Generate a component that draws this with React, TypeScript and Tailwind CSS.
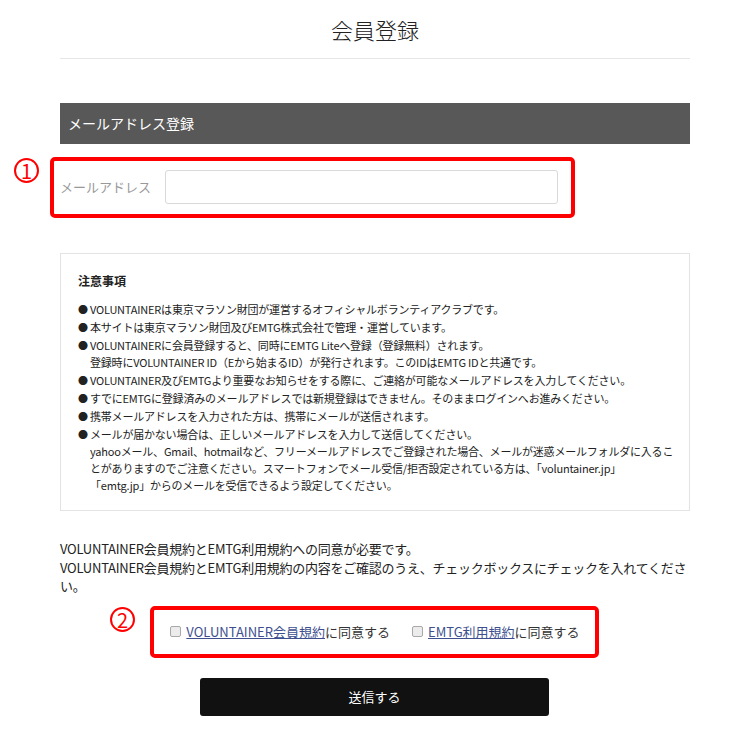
import React from "react";

const notes: string[][] = [
  ["VOLUNTAINERは東京マラソン財団が運営するオフィシャルボランティアクラブです。"],
  ["本サイトは東京マラソン財団及びEMTG株式会社で管理・運営しています。"],
  [
    "VOLUNTAINERに会員登録すると、同時にEMTG Liteへ登録（登録無料）されます。",
    "登録時にVOLUNTAINER ID（Eから始まるID）が発行されます。このIDはEMTG IDと共通です。",
  ],
  ["VOLUNTAINER及びEMTGより重要なお知らせをする際に、ご連絡が可能なメールアドレスを入力してください。"],
  ["すでにEMTGに登録済みのメールアドレスでは新規登録はできません。そのままログインへお進みください。"],
  ["携帯メールアドレスを入力された方は、携帯にメールが送信されます。"],
  [
    "メールが届かない場合は、正しいメールアドレスを入力して送信してください。",
    "yahooメール、Gmail、hotmailなど、フリーメールアドレスでご登録された場合、メールが迷惑メールフォルダに入るこ",
    "とがありますのでご注意ください。スマートフォンでメール受信/拒否設定されている方は、「voluntainer.jp」",
    "「emtg.jp」からのメールを受信できるよう設定してください。",
  ],
];

const Marker = ({ n }: { n: string }) => (
  <span className="absolute flex h-[25px] w-[25px] items-center justify-center rounded-full border-2 border-[#ff0000] text-[20px] leading-none text-[#ff0000]">
    {n}
  </span>
);

const Checkbox = () => (
  <span className="inline-block h-[11px] w-[11px] shrink-0 rounded-[2px] border border-[#a8a8a8] bg-[#ececec]" />
);

export default function App() {
  return (
    <div className="relative min-h-[738px] w-[750px] bg-white font-['Noto_Sans_CJK_JP','Noto_Sans',sans-serif] text-[#333]">
      <div className="mx-[60px] w-[630px]">
        {/* title */}
        <div className="border-b border-[#e6e6e6] pt-[15px] pb-[15px] text-center text-[22px] font-light leading-[28px] text-[#222]">
          会員登録
        </div>

        {/* email section */}
        <div className="mt-[44px] h-[41px] bg-[#585858] pl-[8px] text-[14px] leading-[41px] text-white">
          メールアドレス登録
        </div>
        <div className="mt-[26px] flex h-[34px] items-center">
          <span className="w-[105px] text-[13px] text-[#999]">メールアドレス</span>
          <input className="h-[34px] w-[393px] rounded-[3px] border border-[#d9d9d9] bg-white" />
        </div>

        {/* notes */}
        <div className="mt-[49px] border border-[#e3e3e3] px-[17px] pt-[19px] pb-[15px]">
          <div className="text-[12px] font-bold leading-[16px] text-[#222]">注意事項</div>
          <ul className="mt-[12px] text-[11px] leading-[17px] tracking-[-0.2px] text-[#222]">
            {notes.map((lines, i) => (
              <li key={i} className="mb-[1px] flex whitespace-nowrap">
                <span className="w-[12px] shrink-0 text-[10px]">●</span>
                <span>
                  {lines.map((l, j) => (
                    <span key={j} className="block">
                      {l}
                    </span>
                  ))}
                </span>
              </li>
            ))}
          </ul>
        </div>

        {/* agreement */}
        <div className="mt-[29px] text-[13px] leading-[18.5px] tracking-[-0.25px] text-[#222]">
          <p>VOLUNTAINER会員規約とEMTG利用規約への同意が必要です。</p>
          <p>VOLUNTAINER会員規約とEMTG利用規約の内容をご確認のうえ、チェックボックスにチェックを入れてください。</p>
        </div>
        <div className="mt-[26px] flex items-center justify-center gap-[22px] text-[13px] text-[#333]">
          <label className="flex items-center gap-[5px]">
            <Checkbox />
            <span>
              <a className="text-[#3d4f8f] underline">VOLUNTAINER会員規約</a>に同意する
            </span>
          </label>
          <label className="flex items-center gap-[5px]">
            <Checkbox />
            <span>
              <a className="text-[#3d4f8f] underline">EMTG利用規約</a>に同意する
            </span>
          </label>
        </div>
        <div className="mt-[37px] flex justify-center pr-[1px]">
          <button className="h-[38px] w-[349px] rounded-[3px] bg-[#111] text-[13px] text-white">送信する</button>
        </div>
      </div>

      {/* annotation overlays */}
      <div className="pointer-events-none absolute left-[50px] top-[157px] h-[61px] w-[525px] rounded-[5px] border-4 border-[#ff0000]" />
      <div className="absolute left-[14px] top-[158px]">
        <Marker n="1" />
      </div>
      <div className="pointer-events-none absolute left-[150px] top-[606px] h-[52px] w-[449px] rounded-[5px] border-4 border-[#ff0000]" />
      <div className="absolute left-[110px] top-[607px]">
        <Marker n="2" />
      </div>
    </div>
  );
}
